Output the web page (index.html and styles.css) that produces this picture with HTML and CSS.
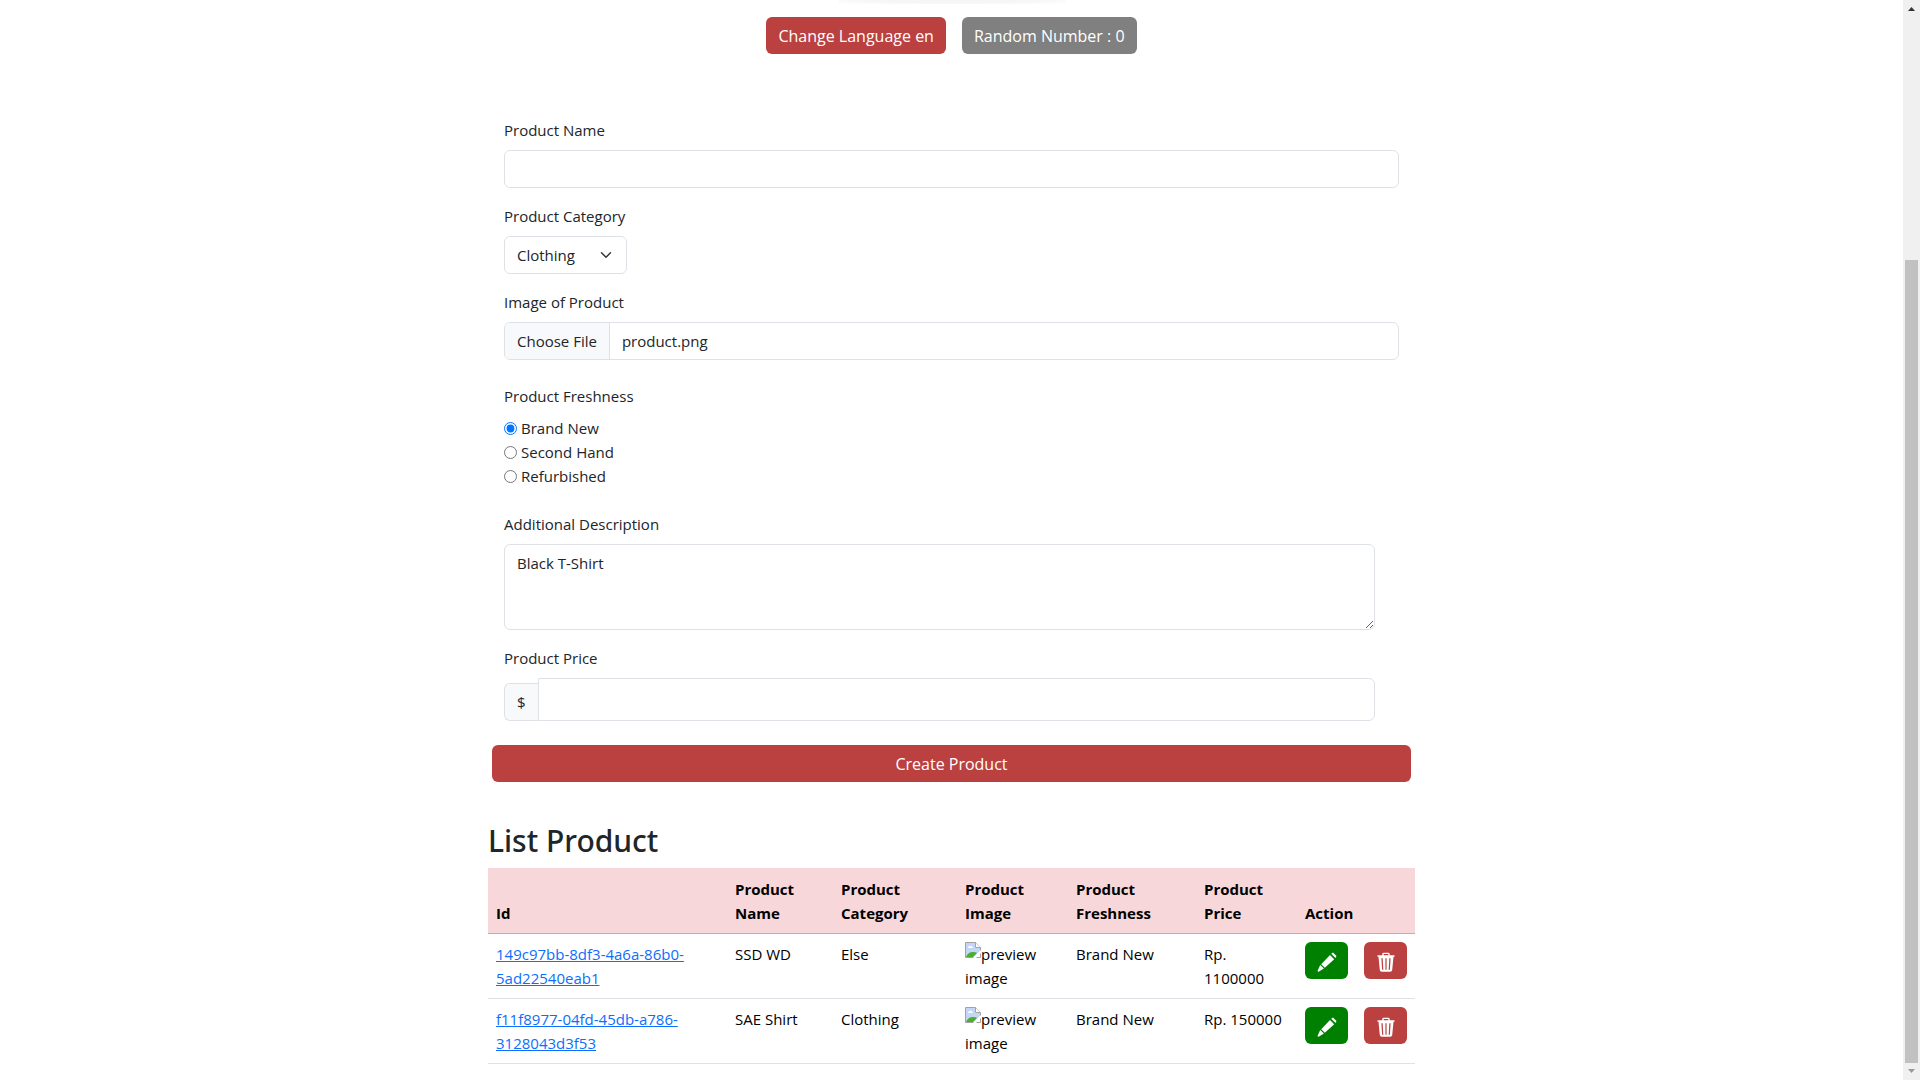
FILE: index.html
```html
<!DOCTYPE html>
<html lang="en">
<head>
<meta charset="utf-8">
<meta name="viewport" content="width=device-width, initial-scale=1">
<title>Create Product</title>
<link rel="stylesheet" href="styles.css">
</head>
<body>
<svg class="sprite" aria-hidden="true">
  <symbol id="pencil" viewBox="0 0 20 20">
    <path d="M14.2 1.7 16 .6 19.5 4l-1 2-4.3-4.3zM13 3l4.2 4.2-9.4 8.6-3.6-3.6zM3.2 13l3.7 3.6L1.600 19.700Q.4 20 .7 18.600z"/>
  </symbol>
  <symbol id="trash" viewBox="0 0 20 20">
    <path fill-rule="evenodd" d="M6.300 3.200V2Q6.300.7 7.600.7h4.800q1.300 0 1.300 1.300v1.200h4.800v1.600h-1L16.200 18q-.2 1.800-2 1.800H5.800q-1.800 0-2-1.800L2.500 4.800h-1V3.200zM7.700 3.200h4.600V2H7.700zM5.400 6.200l.7 11.600h1.200L6.700 6.200zM9.400 6.200v11.600h1.200V6.200zM13.300 6.200l-.6 11.600h1.200l.7-11.600z"/>
  </symbol>
  <symbol id="broken" viewBox="0 0 16 16">
    <path d="M.5.500h10l5 5v10H.5z" fill="#fff" stroke="#a3a3a3"/>
    <path d="M1 1h9v5h5v3L9 15H1z" fill="#c3d6f6"/>
    <path d="M3 6q0-2 2-2 2-1 2 1 2 0 1 1z" fill="#fff"/>
    <path d="M1 15q2-5 7-5 3 0 4 1l-4 4z" fill="#4cae2a"/>
    <path d="M10.500.500v5h5" fill="#fff" stroke="#a3a3a3"/>
    <path d="M16 8v3l-5 5H8z" fill="#fff"/>
  </symbol>
</svg>
<div class="page">
  <main class="content">
    <div class="logo-shadow"></div>
    <div class="toolbar">
      <button class="btn btn-red" type="button">Change Language en</button>
      <button class="btn btn-gray" type="button">Random Number : 0</button>
    </div>

    <form class="form">
      <div class="field">
        <label for="name">Product Name</label>
        <input class="control" id="name" type="text">
      </div>
      <div class="field">
        <label for="category">Product Category</label>
        <select class="control select" id="category"><option>Clothing</option><option>Electronic</option><option>Else</option></select>
      </div>
      <div class="field field-wide">
        <label for="image">Image of Product</label>
        <input class="control file" id="image" type="file">
      </div>
      <fieldset class="field field-wide">
        <legend>Product Freshness</legend>
        <label class="choice"><input type="radio" name="freshness" checked>Brand New</label>
        <label class="choice"><input type="radio" name="freshness">Second Hand</label>
        <label class="choice"><input type="radio" name="freshness">Refurbished</label>
      </fieldset>
      <div class="field field-inset">
        <label for="description">Additional Description</label>
        <textarea class="control textarea" id="description">Black T-Shirt</textarea>
      </div>
      <div class="field field-inset field-wide">
        <label for="price">Product Price</label>
        <div class="price">
          <span class="addon">$</span>
          <input class="control price-input" id="price" type="text">
        </div>
      </div>
      <button class="btn btn-red submit" type="submit">Create Product</button>
    </form>

    <h2>List Product</h2>
    <table class="products">
      <colgroup><col><col class="c-name"><col class="c-category"><col class="c-image"><col class="c-fresh"><col class="c-price"><col class="c-action"></colgroup>
      <thead>
        <tr><th>Id</th><th>Product Name</th><th>Product Category</th><th>Product Image</th><th>Product Freshness</th><th>Product Price</th><th>Action</th></tr>
      </thead>
      <tbody>
        <tr>
          <td><a href="#149c97bb">149c97bb-8df3-4a6a-86b0-5ad22540eab1</a></td>
          <td>SSD WD</td><td>Else</td>
          <td><svg class="broken"><use href="#broken"/></svg>preview image</td>
          <td>Brand New</td><td>Rp. 1100000</td>
          <td><div class="actions">
            <button class="btn btn-green btn-icon" type="button" aria-label="Edit"><svg class="icon"><use href="#pencil"/></svg></button>
            <button class="btn btn-red btn-icon" type="button" aria-label="Delete"><svg class="icon"><use href="#trash"/></svg></button>
          </div></td>
        </tr>
        <tr>
          <td><a href="#f11f8977">f11f8977-04fd-45db-a786-3128043d3f53</a></td>
          <td>SAE Shirt</td><td>Clothing</td>
          <td><svg class="broken"><use href="#broken"/></svg>preview image</td>
          <td>Brand New</td><td>Rp. 150000</td>
          <td><div class="actions">
            <button class="btn btn-green btn-icon" type="button" aria-label="Edit"><svg class="icon"><use href="#pencil"/></svg></button>
            <button class="btn btn-red btn-icon" type="button" aria-label="Delete"><svg class="icon"><use href="#trash"/></svg></button>
          </div></td>
        </tr>
      </tbody>
    </table>
  </main>
  <div class="scrollbar" aria-hidden="true">
    <svg class="arrow" viewBox="0 0 17 17"><path d="M5 11h7L8.500 7z" fill="#333"/></svg>
    <div class="thumb"></div>
    <svg class="arrow" viewBox="0 0 17 17"><path d="M5 6h7l-3.500 4z" fill="#999"/></svg>
  </div>
</div>
<script src="script.js"></script>
</body>
</html>
```
FILE: styles.css
```css
* { box-sizing: border-box; }

body {
  margin: 0;
  background: #fff;
  color: #212529;
  font: 15px/24px "Open Sans", "Noto Sans", sans-serif;
}

.sprite { display: none; }

.page {
  display: grid;
  grid-template-columns: 1fr 17px;
  min-height: 100vh;
}

.content {
  width: 100%;
  max-width: 927px;
  margin: 0 auto;
  padding-bottom: 15px;
}

.logo-shadow {
  width: 226px;
  height: 4px;
  margin: 0 auto;
  background: radial-gradient(ellipse at top, #f6f6f6 50%, #fff 100%);
}

.toolbar {
  display: flex;
  justify-content: center;
  gap: 16px;
  padding-top: 13px;
}

.btn {
  height: 37px;
  padding: 0 12px;
  border: 0;
  border-radius: 6px;
  color: #fff;
  font: 16px/24px "Open Sans", "Noto Sans", sans-serif;
}

.btn-red { background: #bb4040; }
.btn-gray { background: #808080; }
.btn-green { background: #008000; }

.form {
  display: flex;
  flex-direction: column;
  padding: 64px 4px 0;
}

.field {
  display: flex;
  flex-direction: column;
  gap: 8px;
  min-width: 0;
  margin: 0 12px 16px;
  padding: 0;
  border: 0;
}

.field-wide { margin-bottom: 24px; }
.field-inset { margin-right: 36px; }

.control {
  width: 100%;
  height: 38px;
  margin: 0;
  padding: 6px 12px;
  border: 1px solid #dee2e6;
  border-radius: 6px;
  background: #fff;
  color: #212529;
  font: inherit;
}

.select {
  width: 123px;
  appearance: none;
  background: #fff url("data:image/svg+xml,%3Csvg xmlns='http://www.w3.org/2000/svg' viewBox='0 0 16 16'%3E%3Cpath fill='none' stroke='%23343a40' stroke-linecap='round' stroke-linejoin='round' stroke-width='2' d='m2 5 6 6 6-6'/%3E%3C/svg%3E") no-repeat right 14px center / 12px 12px;
}

.file { overflow: hidden; }

.file::file-selector-button {
  height: 38px;
  margin: -7px 12px -7px -12px;
  padding: 6px 12px;
  border: 0;
  border-right: 1px solid #dee2e6;
  background: #f8f9fa;
  color: #212529;
  font: inherit;
}

legend {
  margin-bottom: 8px;
  padding: 0;
}

.choice {
  display: flex;
  align-items: center;
  gap: 4px;
  margin-bottom: -8px;
}

.choice:last-child { margin-bottom: 0; }

.choice input {
  width: 13px;
  height: 13px;
  margin: 0;
}

.textarea {
  height: 86px;
  resize: vertical;
}

.price {
  display: flex;
  align-items: flex-end;
}

.addon {
  height: 38px;
  padding: 6px 12px;
  border: 1px solid #dee2e6;
  border-right: 0;
  border-radius: 6px 0 0 6px;
  background: #f8f9fa;
}

.price-input {
  flex: 1;
  height: 43px;
  border-radius: 0 6px 6px 0;
}

h2 {
  margin: 40px 0 8px;
  font-family: "Noto Sans", "Open Sans", sans-serif;
  font-size: 30px;
  font-weight: 500;
  line-height: 38px;
}

.products {
  width: 100%;
  table-layout: fixed;
  border-collapse: collapse;
  color: #000;
}

.c-name { width: 106px; }
.c-category { width: 124px; }
.c-image { width: 111px; }
.c-fresh { width: 128px; }
.c-price { width: 101px; }
.c-action { width: 118px; }

.products th,
.products td {
  height: 65px;
  padding: 8px;
  border-bottom: 1px solid #dee2e6;
  text-align: left;
  vertical-align: top;
}

.products th {
  border-color: #c6acae;
  background: #f8d7da;
  vertical-align: bottom;
}

a { color: #0d6efd; }

.broken {
  width: 16px;
  height: 16px;
  vertical-align: 2px;
}

.actions {
  display: flex;
  gap: 16px;
}

.btn-icon {
  display: flex;
  align-items: center;
  justify-content: center;
  width: 43px;
  padding: 4px 0 0;
}

.icon {
  width: 20px;
  height: 20px;
  fill: #fff;
}

.scrollbar {
  display: flex;
  flex-direction: column;
  background: #f0f0f0;
}

.arrow {
  width: 17px;
  height: 17px;
}

.thumb {
  height: 803px;
  margin: auto 2px 0;
  background: #c1c1c1;
}
```
FILE: script.js
```js
// Preselect the default product picture in the file field.
const files = new DataTransfer();
files.items.add(new File([""], "product.png", { type: "image/png" }));
document.getElementById("image").files = files.files;
```
